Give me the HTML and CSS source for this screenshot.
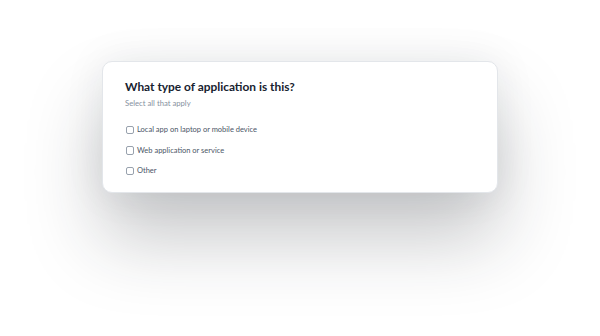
FILE: index.html
```html
<!DOCTYPE html>
<html>
<head>
<meta charset="utf-8">
<link rel="stylesheet" href="styles.css">
</head>
<body>
<div class="page">
  <div class="card">
    <h1 class="title">What type of application is this?</h1>
    <p class="subtitle">Select all that apply</p>
    <ul class="options">
      <li class="option"><span class="box"></span><span class="label">Local app on laptop or mobile device</span></li>
      <li class="option"><span class="box"></span><span class="label">Web application or service</span></li>
      <li class="option"><span class="box"></span><span class="label">Other</span></li>
    </ul>
  </div>
</div>
</body>
</html>
```
FILE: styles.css
```css
html, body {
  margin: 0;
  padding: 0;
  background: #ffffff;
  width: 600px;
  height: 336px;
  overflow: hidden;
  font-family: Lato, "Open Sans", sans-serif;
}
.page {
  display: flex;
  justify-content: center;
  padding-top: 61px;
}
.card {
  box-sizing: border-box;
  width: 396px;
  height: 132px;
  background: #ffffff;
  border: 1px solid #e3e6ea;
  border-radius: 10px;
  padding: 17px 22px 0 22px;
  box-shadow: 0 45px 75px rgba(30, 35, 45, 0.25), 0 0 40px rgba(30, 35, 45, 0.08);
}
.title {
  margin: 0;
  font-size: 11.9px;
  font-weight: 700;
  color: #17222f;
  line-height: 16px;
}
.subtitle {
  margin: 3px 0 0 0;
  font-size: 7.7px;
  color: #8791a0;
  line-height: 11px;
}
.options {
  list-style: none;
  margin: 15px 0 0 0;
  padding: 0;
  display: flex;
  flex-direction: column;
  gap: 8.5px;
}
.option {
  display: flex;
  align-items: center;
  gap: 3px;
  height: 12px;
}
.box {
  box-sizing: border-box;
  width: 8.5px;
  height: 8.5px;
  margin-left: 0.5px;
  border: 1px solid #98a1ad;
  border-radius: 2px;
  background: #fff;
}
.label {
  font-size: 7.5px;
  color: #4a5566;
  line-height: 12px;
}
```
